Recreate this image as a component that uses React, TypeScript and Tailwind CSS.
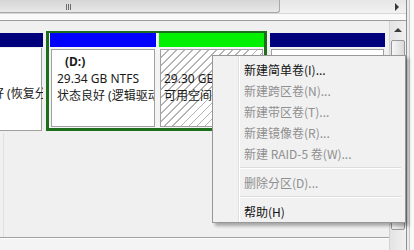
import React from "react";

type Item = { t?: string; on?: boolean; sep?: boolean };

const menu: Item[] = [
  { t: "新建简单卷(I)...", on: true },
  { t: "新建跨区卷(N)...", on: false },
  { t: "新建带区卷(T)...", on: false },
  { t: "新建镜像卷(R)...", on: false },
  { t: "新建 RAID-5 卷(W)...", on: false },
  { sep: true },
  { t: "删除分区(D)...", on: false },
  { sep: true },
  { t: "帮助(H)", on: true },
];

export default function App() {
  return (
    <div className="relative w-[414px] h-[250px] overflow-hidden bg-[#f4f4f4] flex font-['Noto_Sans','Noto_Sans_CJK_SC',sans-serif] text-[12px] text-[#1a1a1a]">
      {/* main panel */}
      <div className="w-[407px] flex flex-col border-r border-[#8e8e8e]">
        {/* horizontal scrollbar */}
        <div className="h-[14px] flex bg-gradient-to-b from-[#e6e6e6] to-[#f2f2f2] border-b border-[#d6d6d6]">
          <div className="w-[280px] rounded-br-[3px] border-r border-b border-[#a8a8a8] bg-gradient-to-b from-[#d6d6d6] to-[#e8e8e8] flex items-start pl-[66px] pt-[4px]">
            <div className="flex gap-[1px]">
              <div className="w-[1px] h-[6px] bg-[#6a6a6a]" />
              <div className="w-[1px] h-[6px] bg-[#6a6a6a]" />
              <div className="w-[1px] h-[6px] bg-[#6a6a6a]" />
            </div>
          </div>
          <div className="flex-1" />
          <div className="w-[18px] flex items-center justify-center">
            <div className="w-0 h-0 border-y-[4px] border-y-transparent border-l-[4px] border-l-[#3a3a3a]" />
          </div>
        </div>
        <div className="h-[7px] bg-[#fafafa] border-b border-[#9a9a9a]" />

        {/* body */}
        <div className="flex-1 flex">
          <div className="w-[389px] flex flex-col">
            <div className="h-[217px] flex flex-col bg-[#f0f0f0] border-b border-[#a0a0a0] pt-[10px]">
              {/* partition row */}
              <div className="flex h-[100px]">
                {/* first partition (clipped) */}
                <div className="w-[43px] flex flex-col pt-[2px] overflow-hidden">
                  <div className="h-[14px] bg-[#00007c]" />
                  <div className="flex-1 mt-[1px] ml-[-50px] w-[92px] shrink-0 bg-white border-r border-b border-[#a0a0a0] pl-[6px] pt-[3px] leading-[17px] whitespace-nowrap">
                    <div>&nbsp;</div>
                    <div>&nbsp;</div>
                    <div>状态良好 (恢复分区)</div>
                  </div>
                </div>

                {/* extended partition */}
                <div className="ml-[3px] w-[221px] border-l-[3px] border-r-[3px] border-t-[2px] border-b-[3px] border-[#1d6e1d] flex pl-[1px] bg-[#f4f4f4]">
                  <div className="w-[106px] flex flex-col">
                    <div className="h-[14px] bg-[#0000ff]" />
                    <div className="flex-1 mt-[2px] mx-[1px] mb-[1px] bg-white border border-[#a0a0a0] pl-[5px] pt-[3px] leading-[17px] whitespace-nowrap overflow-hidden">
                      <div className="font-bold pl-[8px]">(D:)</div>
                      <div>29.34 GB NTFS</div>
                      <div>状态良好 (逻辑驱动器)</div>
                    </div>
                  </div>
                  <div className="w-[3px]" />
                  <div className="w-[105px] flex flex-col">
                    <div className="h-[14px] bg-[#00f000]" />
                    <div className="flex-1 mt-[2px] mx-[1px] mb-[1px] border border-[#a0a0a0] bg-[image:repeating-linear-gradient(135deg,#ffffff_0px,#ffffff_4.5px,#b4b4b4_4.5px,#b4b4b4_5.7px)] pl-[3px] pt-[3px] leading-[17px] whitespace-nowrap overflow-hidden">
                      <div>&nbsp;</div>
                      <div>29.30 GB</div>
                      <div>可用空间</div>
                    </div>
                  </div>
                </div>

                {/* last partition */}
                <div className="ml-[3px] w-[115px] flex flex-col pt-[2px]">
                  <div className="h-[14px] bg-[#00007c]" />
                  <div className="flex-1 mt-[2px] mx-[1px] bg-white border border-[#a0a0a0]" />
                </div>
              </div>
              <div className="flex-1 mt-[2px] ml-[3px] border-l border-[#e2e2e2]" />
            </div>
            <div className="h-[1px] bg-white" />
          </div>

          {/* vertical scrollbar */}
          <div className="w-[17px] bg-gradient-to-r from-[#e4e4e4] to-[#f0f0f0] border-l border-[#d2d2d2] flex flex-col items-center">
            <div className="h-[17px] flex items-center justify-center">
              <div className="w-0 h-0 border-x-[4px] border-x-transparent border-b-[4px] border-b-[#3a3a3a]" />
            </div>
            <div className="w-[14px] h-[190px] mt-[2px] rounded-[2px] border border-[#979797] bg-gradient-to-r from-[#f6f6f6] to-[#dadada]" />
          </div>
        </div>
      </div>

      {/* right strip */}
      <div className="flex-1 flex">
        <div className="w-[2px] bg-[#ececec]" />
        <div className="flex-1 bg-[#f9f9f9] border-l border-[#c8c8c8]" />
      </div>

      {/* context menu */}
      <div className="absolute left-[212px] top-[55px] w-[194px] bg-[#f1f1f1] border border-[#979797] shadow-[3px_3px_3px_rgba(0,0,0,0.3)] flex font-['Noto_Sans_CJK_SC','Noto_Sans',sans-serif]">
        <div className="w-[26px] border-r border-[#e0e0e0] shadow-[1px_0_0_#ffffff]" />
        <div className="flex-1 flex flex-col pt-[3px]">
          {menu.map((m, i) =>
            m.sep ? (
              <div key={i} className="h-[8px] flex items-center pl-[1px] pr-[4px]">
                <div className="w-full h-[2px] border-t border-[#dcdcdc] border-b border-b-white" />
              </div>
            ) : (
              <div
                key={i}
                className={
                  "h-[21px] flex items-center pl-[5px] whitespace-nowrap " +
                  (m.on ? "text-[#111111]" : "text-[#8f8f8f]")
                }
              >
                {m.t}
              </div>
            )
          )}
        </div>
      </div>
    </div>
  );
}
